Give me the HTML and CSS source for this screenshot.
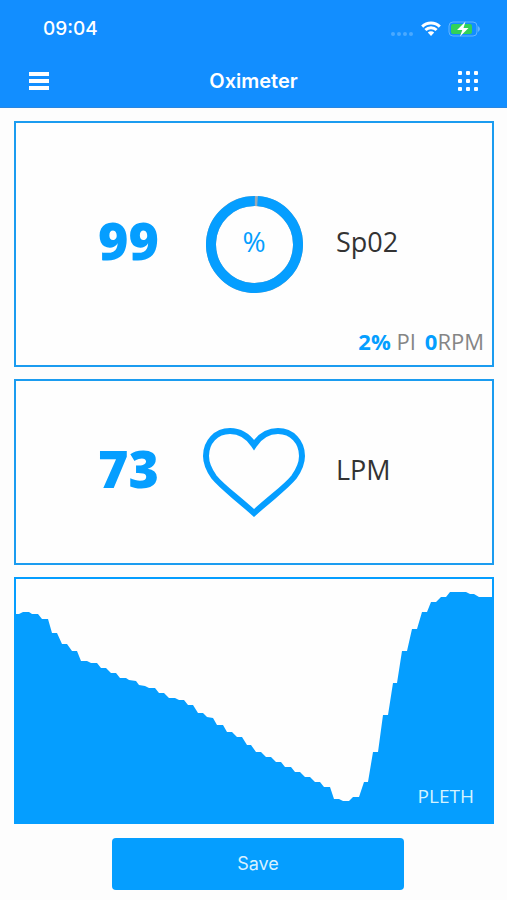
FILE: index.html
```html
<!DOCTYPE html>
<html lang="en">

<head>
    <meta charset="UTF-8">
    <meta name="viewport" content="width=device-width, initial-scale=1">
    <title>Oximeter</title>
    <link rel="stylesheet" href="styles.css">
</head>

<body>
    <header class="header">
        <!-- Status bar -->
        <div class="status-bar">
            <span class="time">09:04</span>
            <div class="status-icons">
                <svg class="signal" width="24" height="6" viewBox="0 0 24 6" aria-hidden="true">
                    <circle cx="3" cy="3" r="2" />
                    <circle cx="9" cy="3" r="2" />
                    <circle cx="15" cy="3" r="2" />
                    <circle cx="21" cy="3" r="2" />
                </svg>
                <svg class="wifi" width="20" height="15" viewBox="0 0 20 15" aria-hidden="true">
                    <path d="M1.2 5.600a12.600 12.600 0 0 1 17.600 0M4.400 9a8 8 0 0 1 11.200 0" />
                    <path class="wifi-dot" d="M6.800 11.600a4.600 4.600 0 0 1 6.400 0L10 15z" />
                </svg>
                <svg class="battery" width="33" height="16" viewBox="0 0 33 16" aria-hidden="true">
                    <rect class="battery-case" x="1" y="1" width="28" height="14" rx="4" />
                    <path class="battery-tip" d="M30 5q4 3 0 6z" />
                    <rect class="battery-level" x="3" y="3" width="21" height="10" rx="2" />
                    <path class="battery-bolt" d="M17.500 0.500L9 9h5.300L12 15.500 20.500 7H15.500z" />
                </svg>
            </div>
        </div>

        <!-- Navigation -->
        <nav class="nav">
            <button type="button" class="nav-button" aria-label="Menu">
                <svg width="20" height="18" viewBox="0 0 20 18">
                    <path d="M0 0h20v4H0zM0 7h20v4H0zM0 14h20v4H0z" />
                </svg>
            </button>
            <h1 class="title">Oximeter</h1>
            <button type="button" class="nav-button" aria-label="Devices">
                <svg width="20" height="20" viewBox="0 0 20 20">
                    <rect width="4" height="4" rx="1" />
                    <rect x="8" width="4" height="4" rx="1" />
                    <rect x="16" width="4" height="4" rx="1" />
                    <rect y="8" width="4" height="4" rx="1" />
                    <rect x="8" y="8" width="4" height="4" rx="1" />
                    <rect x="16" y="8" width="4" height="4" rx="1" />
                    <rect y="16" width="4" height="4" rx="1" />
                    <rect x="8" y="16" width="4" height="4" rx="1" />
                    <rect x="16" y="16" width="4" height="4" rx="1" />
                </svg>
            </button>
        </nav>
    </header>

    <main class="content">
        <!-- Oxygen saturation -->
        <section class="card card-spo2">
            <div class="reading">
                <span class="value">99</span>
                <svg class="ring" width="97" height="97" viewBox="0 0 97 97" aria-hidden="true">
                    <circle class="ring-track" cx="48.5" cy="48.5" r="43.5" />
                    <circle class="ring-value" cx="48.5" cy="48.5" r="43.5" pathLength="100" stroke-dasharray="99 1" transform="rotate(-86 48.5 48.5)" />
                    <text class="ring-text" x="48" y="56" text-anchor="middle">%</text>
                </svg>
                <span class="unit">Sp02</span>
            </div>
            <div class="extra">
                <span><b>2%</b> PI</span>
                <span><b>0</b>RPM</span>
            </div>
        </section>

        <!-- Heart rate -->
        <section class="card card-pulse">
            <div class="reading">
                <span class="value">73</span>
                <svg class="heart" width="102" height="89" viewBox="0 0 102 89" aria-hidden="true">
                    <path d="M51 17C45 8 37 3 27 3C13 3 3 14 3 28C3 36 6 42 11 49C19 59 31 67 51 85C71 67 83 59 91 49C96 42 99 36 99 28C99 14 89 3 75 3C65 3 57 8 51 17z" />
                </svg>
                <span class="unit">LPM</span>
            </div>
        </section>

        <!-- Pleth wave -->
        <section class="card card-pleth">
            <svg class="wave" viewBox="0 0 476 243" role="img" aria-label="Pleth wave">
                <path d="M0 243L0 35 3 35 7 33 13 33 16 35 22 35 26 40 32 40 36 54 41 54 46 65 51 65 56 72 61 72 65 82 71 82 75 84 81 84 85 89 90 89 95 94 100 94 104 99 110 99 113 101 120 102 123 106 129 107 133 109 139 109 143 114 148 114 153 119 159 119 163 121 168 121 172 126 177 126 182 134 187 134 191 138 197 139 201 146 207 146 211 153 216 153 221 158 226 158 231 166 235 166 240 173 245 173 250 178 255 178 260 183 265 183 269 188 275 188 279 193 284 193 289 198 294 198 299 203 304 203 308 208 314 208 318 220 323 220 327 222 333 222 337 218 343 218 348 203 352 203 357 173 362 173 367 136 372 136 377 104 381 104 386 72 391 72 396 50 401 50 406 33 411 33 415 23 420 23 425 18 430 18 434 13 450 13 454 15 458 15 463 18 476 18 476 243z" />
            </svg>
            <span class="wave-label">PLETH</span>
        </section>

        <button type="button" class="save-button">Save</button>
    </main>
</body>

</html>
```

FILE: styles.css
```css
* {
    box-sizing: border-box;
}

body {
    margin: 0;
    background: #fdfdfd;
    color: #333;
    font-family: "Open Sans", "Noto Sans", sans-serif;
}

/* Header */
.header {
    padding-bottom: 2px;
    background: #128eff;
    border-bottom: 1px solid #2a86e0;
    color: #fff;
    font-family: Inter, "Liberation Sans", sans-serif;
}

.status-bar {
    display: flex;
    align-items: center;
    justify-content: space-between;
    height: 57px;
    padding: 0 26px 0 43px;
}

.time {
    font-size: 19px;
    font-weight: 500;
}

.status-icons {
    display: flex;
    align-items: center;
    gap: 7px;
}

.signal {
    align-self: flex-end;
    fill: #4ba9ff;
}

.wifi {
    fill: none;
    stroke: #fff;
    stroke-width: 3;
}

.wifi .wifi-dot {
    fill: #fff;
    stroke: none;
}

.battery-case {
    fill: none;
    stroke: #62b4ff;
    stroke-width: 1;
}

.battery-tip {
    fill: #62b4ff;
}

.battery-level {
    fill: #32d158;
}

.battery-bolt {
    fill: #fff;
}

.nav {
    display: flex;
    align-items: center;
    justify-content: space-between;
    height: 48px;
    padding: 0 20px;
}

.nav-button {
    display: flex;
    padding: 9px;
    border: 0;
    background: none;
    cursor: pointer;
}

.nav-button svg {
    fill: #fff;
}

.title {
    margin: 0;
    font-size: 20px;
    font-weight: 600;
}

/* Cards */
.content {
    display: flex;
    flex-direction: column;
    gap: 12px;
    padding: 13px 13px 9px 14px;
}

.card {
    position: relative;
    border: 2px solid #1b9cf0;
    background: #fefefe;
}

.card-spo2 {
    padding: 73px 0 10px;
}

.card-pulse {
    padding: 47px 0 46px;
}

.reading {
    display: grid;
    grid-template-columns: 1fr 102px 1fr;
    align-items: center;
    justify-items: center;
}

.value {
    justify-self: end;
    padding: 0 44px 10px 0;
    color: #059eff;
    font-size: 52px;
    font-weight: 800;
    line-height: 60px;
}

.unit {
    justify-self: start;
    padding: 0 0 6px 31px;
    font-size: 27px;
    line-height: 36px;
}

.ring circle {
    fill: none;
    stroke-width: 10;
}

.ring .ring-track {
    stroke: #9aa9b5;
}

.ring .ring-value {
    stroke: #059eff;
}

.ring-text {
    fill: #059eff;
    font-size: 28px;
}

.heart {
    fill: none;
    stroke: #059eff;
    stroke-width: 6;
}

.extra {
    display: flex;
    justify-content: flex-end;
    gap: 9px;
    margin-top: 34px;
    padding-right: 8px;
    color: #858585;
    font-size: 22px;
    line-height: 28px;
}

.extra b {
    color: #059eff;
}

/* Wave */
.wave {
    display: block;
    width: 100%;
    fill: #059eff;
}

.card-pleth {
    border-color: #059eff;
    background: linear-gradient(#fefefe 95%, #059eff 95%);
}

.wave-label {
    position: absolute;
    right: 18px;
    bottom: 12px;
    color: #d4f3ff;
    font-size: 19px;
    line-height: 28px;
}

.save-button {
    align-self: center;
    width: 61%;
    margin: 2px 0 0 8px;
    padding: 15px;
    border: 0;
    border-radius: 4px;
    background: #059eff;
    color: #d8f1ff;
    font-family: Inter, "Liberation Sans", sans-serif;
    font-size: 18px;
    line-height: 22px;
    cursor: pointer;
}
```
